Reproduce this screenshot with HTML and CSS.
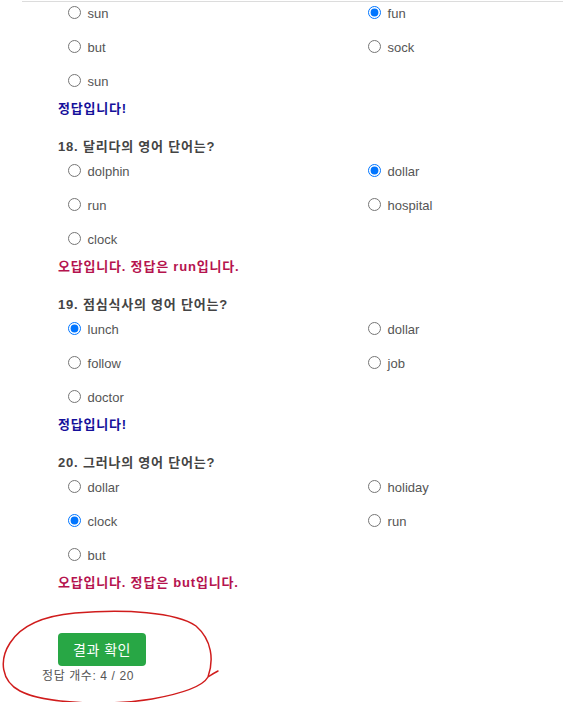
FILE: index.html
```html
<!DOCTYPE html>
<html lang="ko">
<head>
<meta charset="utf-8">
<link rel="stylesheet" href="styles.css">
<title>영어 단어 퀴즈</title>
</head>
<body>
<div class="page">
  <div class="topline"></div>
  <div class="quiz">
    <section class="question first">
      <div class="options">
        <label class="opt"><input type="radio" name="q17"> sun</label>
        <label class="opt"><input type="radio" name="q17" checked> fun</label>
        <label class="opt"><input type="radio" name="q17"> but</label>
        <label class="opt"><input type="radio" name="q17"> sock</label>
        <label class="opt"><input type="radio" name="q17"> sun</label>
      </div>
      <p class="feedback correct">정답입니다!</p>
    </section>

    <section class="question">
      <h3 class="qtitle">18. 달리다의 영어 단어는?</h3>
      <div class="options">
        <label class="opt"><input type="radio" name="q18"> dolphin</label>
        <label class="opt"><input type="radio" name="q18" checked> dollar</label>
        <label class="opt"><input type="radio" name="q18"> run</label>
        <label class="opt"><input type="radio" name="q18"> hospital</label>
        <label class="opt"><input type="radio" name="q18"> clock</label>
      </div>
      <p class="feedback wrong">오답입니다. 정답은 run입니다.</p>
    </section>

    <section class="question">
      <h3 class="qtitle">19. 점심식사의 영어 단어는?</h3>
      <div class="options">
        <label class="opt"><input type="radio" name="q19" checked> lunch</label>
        <label class="opt"><input type="radio" name="q19"> dollar</label>
        <label class="opt"><input type="radio" name="q19"> follow</label>
        <label class="opt"><input type="radio" name="q19"> job</label>
        <label class="opt"><input type="radio" name="q19"> doctor</label>
      </div>
      <p class="feedback correct">정답입니다!</p>
    </section>

    <section class="question">
      <h3 class="qtitle">20. 그러나의 영어 단어는?</h3>
      <div class="options">
        <label class="opt"><input type="radio" name="q20"> dollar</label>
        <label class="opt"><input type="radio" name="q20"> holiday</label>
        <label class="opt"><input type="radio" name="q20" checked> clock</label>
        <label class="opt"><input type="radio" name="q20"> run</label>
        <label class="opt"><input type="radio" name="q20"> but</label>
      </div>
      <p class="feedback wrong">오답입니다. 정답은 but입니다.</p>
    </section>
  </div>

  <div class="result">
    <button class="btn-result" type="button">결과 확인</button>
    <p class="score">정답 개수: 4 / 20</p>
  </div>

  <svg class="annotation" width="230" height="110" viewBox="0 595 230 110" aria-hidden="true">
    <path d="M218 671 C214 673 211 675 208 677 C214 660 212 640 196 626 C176 612 125 609 75 613 C42 616 20 627 10 643 C-1 660 1 681 20 691 C45 704 110 706 152 699 C185 693 203 686 208 677" fill="none" stroke="#d01c1c" stroke-width="1.5" stroke-linecap="round"/>
  </svg>
</div>
</body>
</html>
```

FILE: styles.css
```css
html, body {
  margin: 0;
  padding: 0;
  background: #fff;
}

body {
  font-family: "Liberation Sans", "Noto Sans CJK KR", sans-serif;
  font-size: 13px;
  color: #555;
}

.page {
  position: relative;
  width: 563px;
  height: 702px;
  overflow: hidden;
  padding-top: 1px;
  box-sizing: border-box;
}

.topline {
  height: 1px;
  margin-left: 22px;
  background: #dcdcdc;
}

.quiz {
  padding-top: 1px;
  padding-left: 58px;
}

.question {
  margin-bottom: 18px;
}

.qtitle {
  margin: 0 0 4px 0;
  font-size: 13px;
  line-height: 20px;
  font-weight: bold;
  color: #444;
  letter-spacing: 0.8px;
}

.options {
  display: grid;
  grid-template-columns: 300px 200px;
  row-gap: 14px;
  margin-left: 5px;
}

.opt {
  display: block;
  height: 20px;
  line-height: 20px;
  font-size: 13px;
  color: #555;
  white-space: nowrap;
}

.opt input {
  margin: 3px 3px 0 5px;
  vertical-align: -1px;
}

.feedback {
  margin: 8px 0 0 0;
  font-size: 13px;
  line-height: 20px;
  font-weight: bold;
  letter-spacing: 0.8px;
}

.correct {
  color: #15109a;
}

.wrong {
  color: #b5134e;
}

.result {
  margin-top: 40px;
}

.btn-result {
  display: block;
  margin-left: 58px;
  height: 33px;
  padding: 0 15px;
  border: none;
  border-radius: 4px;
  background: #28a745;
  color: #fff;
  font-family: "Noto Sans CJK KR", "Liberation Sans", sans-serif;
  font-size: 14px;
  line-height: 33px;
  letter-spacing: 0.5px;
}

.score {
  margin: 2px 0 0 42px;
  font-size: 12px;
  line-height: 16px;
  color: #555;
  letter-spacing: 0.6px;
}

.annotation {
  position: absolute;
  left: 0;
  top: 595px;
}
```
